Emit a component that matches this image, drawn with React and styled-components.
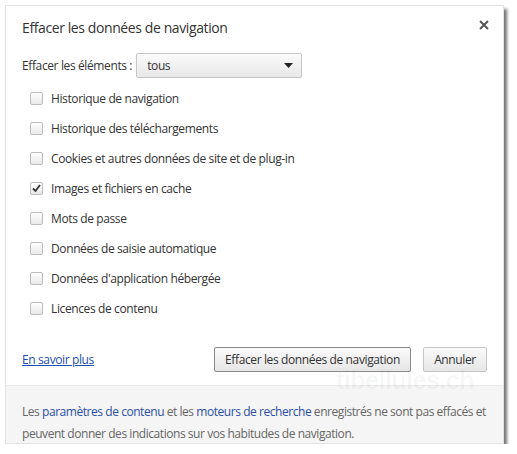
import React from "react";
import styled, { createGlobalStyle } from "styled-components";

const Global = createGlobalStyle`
  html, body { margin: 0; padding: 0; background: #fff; }
  body { font-family: "Open Sans", "Noto Sans", sans-serif; color: #333; }
`;

const Page = styled.div`
  padding: 5px 0 0 5px;
`;

const Dialog = styled.div`
  position: relative;
  width: 499px;
  height: 439px;
  background: #fff;
  border: 1px solid #e2e2e2;
  box-shadow: 3px 4px 3px rgba(0, 0, 0, 0.55);
  display: flex;
  flex-direction: column;
  box-sizing: border-box;
  & > * { flex-shrink: 0; }
`;

const Header = styled.div`
  display: flex;
  align-items: center;
  justify-content: space-between;
  padding: 5px 12px 0 16px;
  height: 32px;
`;

const Title = styled.h1`
  margin: 0;
  font-size: 14px;
  font-weight: 400;
  color: #333;
  letter-spacing: -0.4px;
`;

const Close = styled.button`
  border: 0;
  background: none;
  padding: 0;
  width: 12px;
  height: 12px;
  align-self: flex-start;
  margin-top: 9px;
  display: flex;
`;

const Content = styled.div`
  display: flex;
  flex-direction: column;
  padding: 9px 16px 0 16px;
  font-size: 12px;
  letter-spacing: -0.38px;
`;

const SelectRow = styled.div`
  display: flex;
  align-items: center;
  gap: 4px;
  height: 26px;
`;

const Select = styled.div`
  width: 166px;
  height: 25px;
  box-sizing: border-box;
  border: 1px solid #c6c6c6;
  border-radius: 2px;
  background: linear-gradient(#fafafa, #e8e8e8);
  display: flex;
  align-items: center;
  justify-content: space-between;
  padding: 0 8px 0 10px;
`;

const List = styled.div`
  display: flex;
  flex-direction: column;
  margin-top: 5px;
  padding-left: 8px;
`;

const Item = styled.label`
  display: flex;
  align-items: center;
  gap: 8px;
  height: 30px;
  color: #333;
`;

const Box = styled.span`
  width: 13px;
  height: 13px;
  box-sizing: border-box;
  border: 1px solid #bdbdbd;
  border-radius: 2px;
  background: linear-gradient(#fdfdfd, #e9e9e9);
  display: flex;
  align-items: center;
  justify-content: center;
`;

const Actions = styled.div`
  display: flex;
  align-items: center;
  margin-top: 23px;
  height: 26px;
`;

const Link = styled.a`
  color: #1b4fb0;
  text-decoration: underline;
  margin-right: auto;
`;

const Button = styled.button`
  height: 25px;
  box-sizing: border-box;
  border: 1px solid ${(p) => (p.$primary ? "#8a8a8a" : "#c6c6c6")};
  border-radius: 2px;
  background: linear-gradient(#fafafa, #e6e6e6);
  font-family: inherit;
  font-size: 12px;
  letter-spacing: inherit;
  color: #333;
  padding: 0;
  white-space: nowrap;
  margin-left: ${(p) => (p.$gap ? "12px" : "0")};
  width: ${(p) => p.$w}px;
`;

const Footer = styled.div`
  margin-top: auto;
  border-top: 1px solid #e8e8e8;
  background: #f5f5f5;
  padding: 15px 16px 0 16px;
  height: 42px;
  font-size: 12px;
  letter-spacing: -0.45px;
  line-height: 22px;
  color: #666;
  white-space: nowrap;
`;

const FLink = styled.span`
  color: #2a4fa6;
`;

const Watermark = styled.div`
  position: absolute;
  left: 330px;
  top: 360px;
  font-family: "Liberation Sans", Arial, sans-serif;
  font-weight: 700;
  font-size: 25px;
  letter-spacing: -0.5px;
  color: rgba(0, 0, 0, 0.035);
  pointer-events: none;
`;

const items = [
  ["Historique de navigation", false],
  ["Historique des téléchargements", false],
  ["Cookies et autres données de site et de plug-in", false],
  ["Images et fichiers en cache", true],
  ["Mots de passe", false],
  ["Données de saisie automatique", false],
  ["Données d'application hébergée", false],
  ["Licences de contenu", false],
];

export default function App() {
  return (
    <>
      <Global />
      <Page>
        <Dialog>
          <Header>
            <Title>Effacer les données de navigation</Title>
            <Close aria-label="Fermer">
              <svg width="10" height="10" viewBox="0 0 10 10">
                <path d="M1 1L9 9M9 1L1 9" stroke="#555" strokeWidth="2" />
              </svg>
            </Close>
          </Header>
          <Content>
            <SelectRow>
              <span>Effacer les éléments :</span>
              <Select>
                <span>tous</span>
                <svg width="9" height="5" viewBox="0 0 9 5">
                  <path d="M0 0H9L4.5 5Z" fill="#222" />
                </svg>
              </Select>
            </SelectRow>
            <List>
              {items.map(([label, checked]) => (
                <Item key={label}>
                  <Box>
                    {checked && (
                      <svg width="9" height="9" viewBox="0 0 9 9">
                        <path d="M1 4.5L3.5 7L8 1" stroke="#333" strokeWidth="1.8" fill="none" />
                      </svg>
                    )}
                  </Box>
                  {label}
                </Item>
              ))}
            </List>
            <Actions>
              <Link href="#">En savoir plus</Link>
              <Button $primary $w={197}>Effacer les données de navigation</Button>
              <Button $gap $w={64}>Annuler</Button>
            </Actions>
          </Content>
          <Footer>
            Les <FLink>paramètres de contenu</FLink> et les <FLink>moteurs de recherche</FLink> enregistrés ne sont pas effacés et
            <br />
            peuvent donner des indications sur vos habitudes de navigation.
          </Footer>
          <Watermark>tibellules.ch</Watermark>
        </Dialog>
      </Page>
    </>
  );
}
